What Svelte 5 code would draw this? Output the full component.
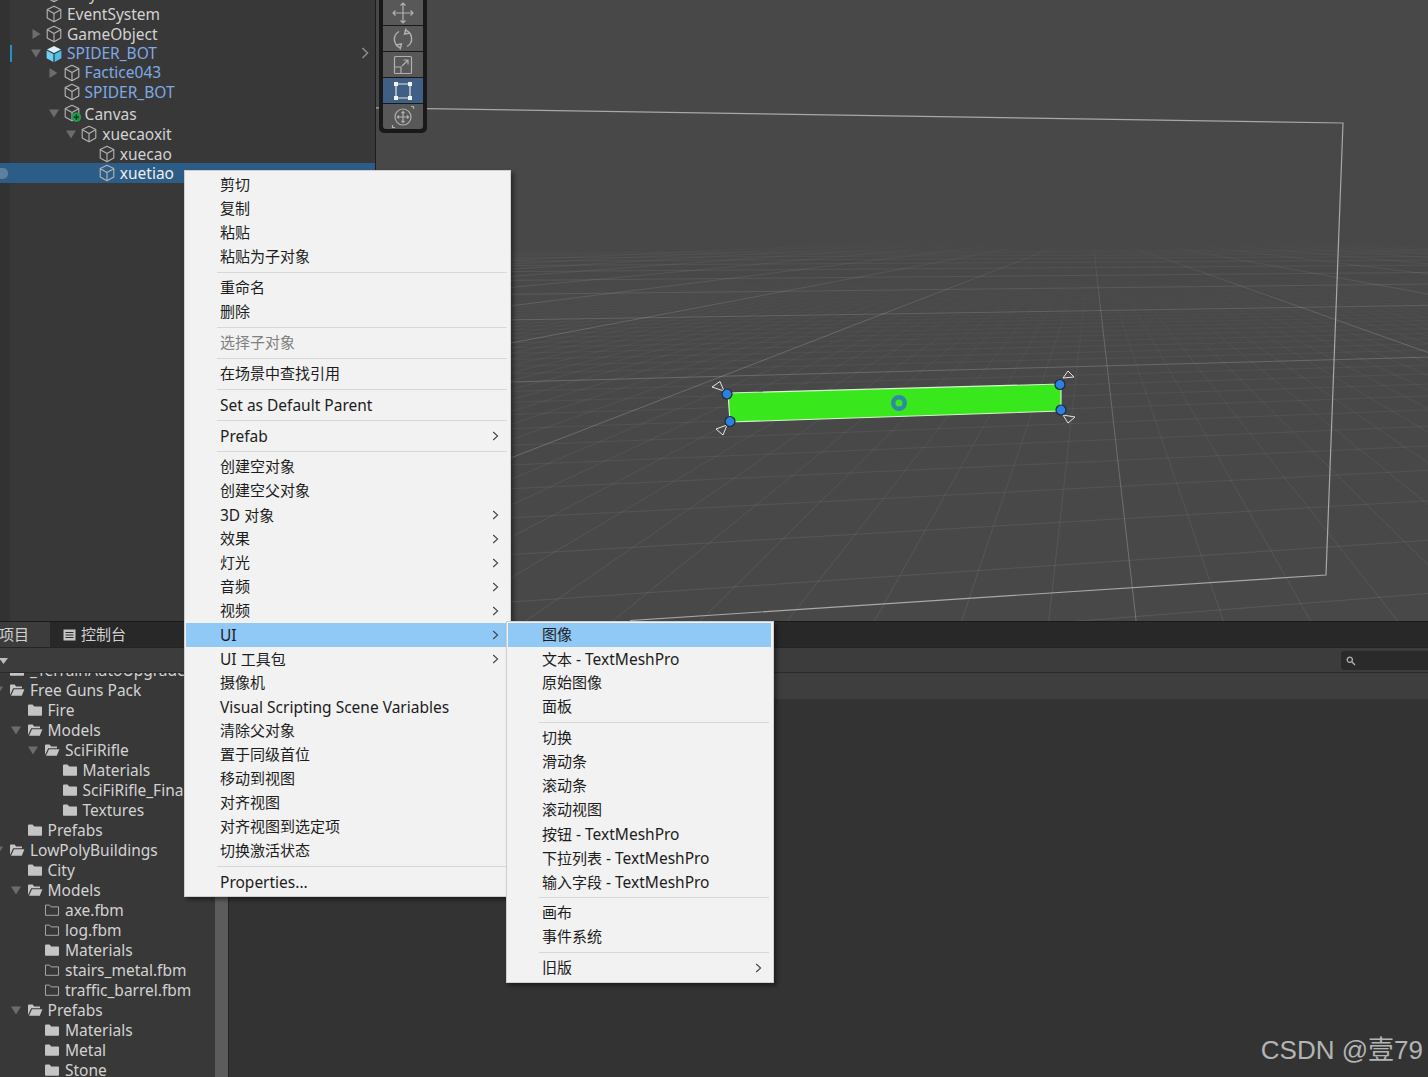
<script>
  const hierarchy = [
    { name: 'Player', depth: 0, h: 20 },
    { name: 'EventSystem', depth: 0, h: 20 },
    { name: 'GameObject', depth: 0, h: 20, arrow: 'right' },
    { name: 'SPIDER_BOT', depth: 0, h: 19, arrow: 'down', kind: 'root' },
    { name: 'Factice043', depth: 1, h: 19, arrow: 'right', kind: 'prefab' },
    { name: 'SPIDER_BOT', depth: 1, h: 20, kind: 'prefab' },
    { name: 'Canvas', depth: 1, h: 22, arrow: 'down', kind: 'canvas', nudge: 2 },
    { name: 'xuecaoxit', depth: 2, h: 20, arrow: 'down' },
    { name: 'xuecao', depth: 3, h: 19, nudge: 1 },
    { name: 'xuetiao', depth: 3, h: 20, nudge: 1, selected: true }
  ];

  const project = [
    { name: '_TerrainAutoUpgrade', depth: 0, icon: 'closed' },
    { name: 'Free Guns Pack', depth: 0, icon: 'open', arrow: true },
    { name: 'Fire', depth: 1, icon: 'closed' },
    { name: 'Models', depth: 1, icon: 'open', arrow: true },
    { name: 'SciFiRifle', depth: 2, icon: 'open', arrow: true },
    { name: 'Materials', depth: 3, icon: 'closed' },
    { name: 'SciFiRifle_Final', depth: 3, icon: 'closed' },
    { name: 'Textures', depth: 3, icon: 'closed' },
    { name: 'Prefabs', depth: 1, icon: 'closed' },
    { name: 'LowPolyBuildings', depth: 0, icon: 'open', arrow: true },
    { name: 'City', depth: 1, icon: 'closed' },
    { name: 'Models', depth: 1, icon: 'open', arrow: true },
    { name: 'axe.fbm', depth: 2, icon: 'empty' },
    { name: 'log.fbm', depth: 2, icon: 'empty' },
    { name: 'Materials', depth: 2, icon: 'closed' },
    { name: 'stairs_metal.fbm', depth: 2, icon: 'empty' },
    { name: 'traffic_barrel.fbm', depth: 2, icon: 'empty' },
    { name: 'Prefabs', depth: 1, icon: 'open', arrow: true },
    { name: 'Materials', depth: 2, icon: 'closed' },
    { name: 'Metal', depth: 2, icon: 'closed' },
    { name: 'Stone', depth: 2, icon: 'closed' }
  ];

  const mainMenu = [
    ['剪切', '复制', '粘贴', '粘贴为子对象'],
    ['重命名', '删除'],
    [{ t: '选择子对象', off: true }],
    ['在场景中查找引用'],
    ['Set as Default Parent'],
    [{ t: 'Prefab', sub: true }],
    ['创建空对象', '创建空父对象',
      { t: '3D 对象', sub: true }, { t: '效果', sub: true }, { t: '灯光', sub: true },
      { t: '音频', sub: true }, { t: '视频', sub: true },
      { t: 'UI', sub: true, on: true }, { t: 'UI 工具包', sub: true },
      '摄像机', 'Visual Scripting Scene Variables', '清除父对象', '置于同级首位',
      '移动到视图', '对齐视图', '对齐视图到选定项', '切换激活状态'],
    ['Properties...']
  ];

  const subMenu = [
    [{ t: '图像', on: true }, '文本 - TextMeshPro', '原始图像', '面板'],
    ['切换', '滑动条', '滚动条', '滚动视图', '按钮 - TextMeshPro', '下拉列表 - TextMeshPro', '输入字段 - TextMeshPro'],
    ['画布', '事件系统'],
    [{ t: '旧版', sub: true }]
  ];

  const item = (i) => (typeof i === 'string' ? { t: i } : i);
  // latin and cjk are set at slightly different sizes
  const runs = (s) => s.split(/([\x00-\x7f]+)/).filter(Boolean);
  const isCjk = (s) => !/^[\x00-\x7f]/.test(s);
  const hasLatin = (s) => /[\x00-\x7f]/.test(s);

  // ground grid, projected from two vanishing points on the horizon
  const horizon = 233;
  const vpA = 6000;
  const vpB = 1092;
  const linesA = [];
  const linesB = [];
  for (let n = -16; n < 120; n++) {
    const d = 0.00671 + n * 0.0004;
    if (d <= 0) continue;
    const major = ((n % 12) + 12) % 12 === 0;
    if (!major && d > 0.024) continue;
    const o = 1 / d;
    const at = (x) => horizon + (o * (vpA - x)) / (vpA - 510);
    linesA.push({ y1: at(376), y2: at(1428), major });
  }
  for (let n = -96; n <= 96; n++) {
    const major = ((n % 12) + 12) % 12 === 0;
    if (!major && Math.abs(n) > 36) continue;
    const base = 1136 + n * 87 - vpB;
    const at = (y) => vpB + (base * (y - horizon)) / 387;
    linesB.push({ x1: at(238), y1: 238, x2: at(621), y2: 621, major });
  }

  const handles = [[727, 394], [1060, 384.5], [1061, 410], [730, 421.5]];
</script>

{#snippet cube(kind)}
  <svg class="cube" width="18" height="18" viewBox="0 0 18 18">
    {#if kind === 'root'}
      <path d="M9 1 16 4.4 9 8 2 4.4Z" fill="#d8f2fb" />
      <path d="M1.6 5.4 8.4 9v8L1.6 13.2Z" fill="#6fd0f5" />
      <path d="M16.4 5.4 9.6 9v8l6.8-3.8Z" fill="#4fbde8" />
    {:else}
      <g fill="none" stroke={kind === 'prefab' ? '#b9b9b9' : '#b4b4b4'} stroke-width="1.1" stroke-linejoin="round">
        <path d="M9 1.2 15.8 4.6V13L9 16.8 2.2 13V4.6Z" />
        <path d="M2.4 4.8 9 8.6l6.6-3.8M9 8.6v8" />
      </g>
    {/if}
    {#if kind === 'canvas'}
      <circle cx="13.4" cy="13.2" r="4.8" fill="#1f9d4d" />
      <path d="M13.4 10.6v5.2M10.8 13.2H16" stroke="#0f3b1e" stroke-width="1.6" />
    {/if}
  </svg>
{/snippet}

{#snippet folder(type)}
  <svg class="folder" width="16" height="14" viewBox="0 0 16 14">
    {#if type === 'closed'}
      <path d="M1 2.5C1 2 1.4 1.6 2 1.6h3.6L7.2 3.4H14c.6 0 1 .4 1 1v7.4c0 .6-.4 1-1 1H2c-.6 0-1-.4-1-1Z" fill="#c4c4c4" />
    {:else if type === 'open'}
      <path d="M1 12V2.5c0-.5.4-.9 1-.9h3.6l1.600 1.800H13v1.800H4.200Z" fill="#c4c4c4" />
      <path d="M2 12.800 5 6.200h10.400L12.800 12.800Z" fill="#c4c4c4" />
    {:else}
      <path d="M1.500 2.100h4l1.600 1.800h7.400v8.400h-13Z" fill="none" stroke="#a6a6a6" stroke-width="1" />
    {/if}
  </svg>
{/snippet}

{#snippet chevron()}
  <svg class="chev" width="7" height="10" viewBox="0 0 7 10">
    <path d="M1.200 1 5.600 5 1.200 9" fill="none" stroke="#444" stroke-width="1.100" />
  </svg>
{/snippet}

{#snippet menuBody(groups)}
  {#each groups as group, g}
    {#if g > 0}<div class="sep"></div>{/if}
    {#each group as raw}
      {@const it = item(raw)}
      <div class="item" class:on={it.on} class:off={it.off} class:latin={hasLatin(it.t)}>
        <span>{#each runs(it.t) as r}<span class:cjk={isCjk(r)}>{r}</span>{/each}</span>
        {#if it.sub}{@render chevron()}{/if}
      </div>
    {/each}
  {/each}
{/snippet}

<div class="app">
  <div class="top">
    <div class="hier">
      <div class="strip"></div>
      <div class="hier-list">
        {#each hierarchy as row}
          <div
            class="row {row.kind === 'root' || row.kind === 'prefab' ? 'blue' : ''}"
            class:selected={row.selected}
            class:mark={row.kind === 'root'}
            style="height:{row.h}px;padding-left:{28 + row.depth * 17.6}px"
          >
            <span class="slot">
              {#if row.arrow === 'right'}
                <svg width="9" height="10" viewBox="0 0 9 10"><path d="M0.500 0 8.500 5 0.500 10Z" fill="#6c6c6c" /></svg>
              {:else if row.arrow === 'down'}
                <svg width="10" height="9" viewBox="0 0 10 9"><path d="M0 0.500H10L5 8.500Z" fill="#6c6c6c" /></svg>
              {/if}
            </span>
            {@render cube(row.kind)}
            <span class="label" style="margin-top:{row.nudge ?? 0}px">{row.name}</span>
          </div>
        {/each}
      </div>
      <svg class="more" width="8" height="12" viewBox="0 0 8 12">
        <path d="M1.500 1 6.500 6 1.500 11" fill="none" stroke="#8a8a8a" stroke-width="1.600" />
      </svg>
      <span class="sel-dot"></span>
    </div>

    <div class="scene">
      <svg class="world" width="1052" height="621" viewBox="376 0 1052 621">
        <defs>
          <linearGradient id="gMajor" gradientUnits="userSpaceOnUse" x1="0" y1="233" x2="0" y2="621">
            <stop offset="0.02" stop-color="#fff" stop-opacity="0" />
            <stop offset="0.07" stop-color="#fff" stop-opacity="0.045" />
            <stop offset="0.25" stop-color="#fff" stop-opacity="0.17" />
            <stop offset="1" stop-color="#fff" stop-opacity="0.24" />
          </linearGradient>
          <linearGradient id="gMinor" gradientUnits="userSpaceOnUse" x1="0" y1="233" x2="0" y2="621">
            <stop offset="0.1" stop-color="#fff" stop-opacity="0" />
            <stop offset="0.3" stop-color="#fff" stop-opacity="0.04" />
            <stop offset="1" stop-color="#fff" stop-opacity="0.085" />
          </linearGradient>
        </defs>
        {#each linesA as l}
          <path d="M376 {l.y1} L1428 {l.y2}" stroke={l.major ? 'url(#gMajor)' : 'url(#gMinor)'} fill="none" />
        {/each}
        {#each linesB as l}
          <path d="M{l.x1} {l.y1} L{l.x2} {l.y2}" stroke={l.major ? 'url(#gMajor)' : 'url(#gMinor)'} fill="none" />
        {/each}
        <path d="M376 107.800 1343 123 1326 575 630 620.500" fill="none" stroke="#a8a8a8" stroke-width="1.200" />

        <path d="M728 393 1061 384 1061 411 730 422Z" fill="#39e81c" stroke="#d8f5d0" stroke-width="1.100" />
        <circle cx="899" cy="403" r="5.800" fill="none" stroke="#2f8aa2" stroke-width="4.400" />
        <g fill="none" stroke="#e4e4e4" stroke-width="1">
          <path d="M712 387 720 381.500 724 391Z" />
          <path d="M1063 378 1068 371 1074 377Z" />
          <path d="M1063 415 1075 417 1068 423Z" />
          <path d="M716 429 727 425 723 435Z" />
        </g>
        {#each handles as h}
          <circle cx={h[0]} cy={h[1]} r="5" fill="#2d7fe0" stroke="#1c2a3a" stroke-width="1.200" />
        {/each}
      </svg>

      <div class="gizmos">
        <div class="tool">
          <svg width="24" height="24" viewBox="0 0 24 24" fill="none" stroke="#b0b0b0" stroke-width="1.200">
            <path d="M12 2v20M2 12h20M9.500 4.500 12 2l2.500 2.500M9.500 19.500 12 22l2.500-2.500M4.500 9.500 2 12l2.500 2.500M19.500 9.500 22 12l-2.500 2.500" />
          </svg>
        </div>
        <div class="tool">
          <svg width="24" height="24" viewBox="0 0 24 24" fill="none" stroke="#b0b0b0" stroke-width="1.400">
            <path d="M10 21A9 9 0 0 1 8 4.500M14 3A9 9 0 0 1 16 19.500" />
            <path d="M15 1.500 13.500 7 19 6M9 22.500l1.500-5.500L5 18" />
          </svg>
        </div>
        <div class="tool">
          <svg width="24" height="24" viewBox="0 0 24 24" fill="none" stroke="#b0b0b0" stroke-width="1.200">
            <rect x="3.500" y="3.500" width="17" height="17" rx="1" />
            <path d="M3.500 14h6.500v6.500M11 13l6-6M12.500 7H17v4.500" />
          </svg>
        </div>
        <div class="tool active">
          <svg width="24" height="24" viewBox="0 0 24 24" fill="none">
            <path d="M5 5h14v14H5Z" stroke="#e6e6e6" stroke-width="1.200" />
            <path d="M3 3h4v4H3ZM17 3h4v4h-4ZM3 17h4v4H3ZM17 17h4v4h-4Z" fill="#f4f4f4" />
          </svg>
        </div>
        <div class="tool last">
          <svg width="24" height="24" viewBox="0 0 24 24" fill="none" stroke="#b0b0b0" stroke-width="1.200">
            <circle cx="12" cy="12" r="8" />
            <path d="M12 6.500v11M6.500 12h11M10.500 8 12 6.500 13.500 8M10.500 16 12 17.500 13.500 16M8 10.500 6.500 12 8 13.500M16 10.500 17.500 12 16 13.500" />
            <path d="M1.500 20v2.500H4M22.500 4V1.500H20" />
          </svg>
        </div>
      </div>
    </div>
  </div>

  <div class="bottom">
    <div class="tabs">
      <div class="tab current"><span>项目</span></div>
      <div class="tab">
        <svg width="13" height="12" viewBox="0 0 13 12">
          <path d="M0.500 0.500h12v11h-12Z" fill="#c4c4c4" />
          <path d="M2.500 3.500h8M2.500 6h8M2.500 8.500h8" stroke="#2a2a2a" stroke-width="1.200" />
        </svg>
        <span>控制台</span>
      </div>
    </div>
    <div class="bar">
      <svg width="9" height="6" viewBox="0 0 9 6"><path d="M0 0H9L4.500 6Z" fill="#bdbdbd" /></svg>
      <div class="search">
        <svg width="10" height="10" viewBox="0 0 10 10" fill="none" stroke="#b4b4b4" stroke-width="1.300">
          <circle cx="3.800" cy="3.800" r="2.600" />
          <path d="M5.800 5.800 9 9" />
        </svg>
      </div>
    </div>
    <div class="body">
      <div class="tree">
        {#each project as row}
          <div class="prow" style="margin-left:{-7 + row.depth * 17.5}px">
            <span class="pslot">
              {#if row.arrow}
                <svg width="10" height="9" viewBox="0 0 10 9"><path d="M0 0.500H10L5 8.500Z" fill="#6c6c6c" /></svg>
              {/if}
            </span>
            {@render folder(row.icon)}
            <span class="plabel">{row.name}</span>
          </div>
        {/each}
      </div>
      <div class="scrollbar"></div>
      <div class="console">
        <div class="console-head"></div>
      </div>
    </div>
  </div>

  <div class="menu main-menu">{@render menuBody(mainMenu)}</div>
  <div class="menu sub-menu">{@render menuBody(subMenu)}</div>
  <div class="watermark">CSDN @壹79</div>
</div>

<style>
  :global(body) {
    margin: 0;
    background: #333;
  }

  .app {
    position: relative;
    width: 1428px;
    height: 1077px;
    overflow: hidden;
    display: flex;
    flex-direction: column;
    font-family: "Noto Sans", "Noto Sans CJK SC", sans-serif;
    font-size: 15.5px;
    color: #d2d2d2;
  }

  .cjk {
    font-size: 15px;
  }

  .top {
    display: flex;
    height: 621px;
    flex: none;
  }

  /* hierarchy */
  .hier {
    position: relative;
    width: 375px;
    flex: none;
    background: #383838;
    border-right: 1px solid #1d1d1d;
    overflow: hidden;
  }
  .strip {
    position: absolute;
    left: 0;
    top: 0;
    bottom: 0;
    width: 10px;
    background: #323232;
  }
  .hier-list {
    position: relative;
    margin-top: -16px;
  }
  .row {
    display: flex;
    align-items: center;
    box-sizing: border-box;
    white-space: nowrap;
    position: relative;
  }
  .row.selected {
    background: #2c5d87;
    color: #eee;
  }
  .row.blue {
    color: #7ea9e6;
  }
  .row.mark::before {
    content: "";
    position: absolute;
    left: 10px;
    top: 1px;
    bottom: 1px;
    width: 2px;
    background: #2a8fc0;
  }
  .sel-dot {
    position: absolute;
    left: -4px;
    top: 168px;
    width: 12px;
    height: 11px;
    border-radius: 5px;
    background: #5f7f9e;
  }
  .more {
    position: absolute;
    left: 361px;
    top: 47px;
  }
  .slot {
    width: 16px;
    height: 12px;
    flex: none;
    display: flex;
    align-items: center;
    justify-content: center;
  }
  .cube {
    margin-left: 1px;
    flex: none;
  }
  .label {
    margin-left: 4px;
    line-height: 17px;
  }

  /* scene */
  .scene {
    position: relative;
    flex: 1;
    background: #484848;
    overflow: hidden;
  }
  .world {
    position: absolute;
    left: 0;
    top: 0;
  }
  .gizmos {
    position: absolute;
    left: 3px;
    top: -4px;
    width: 40px;
    padding: 0 4px 4px;
    background: #191919;
    border-radius: 0 0 5px 5px;
    display: flex;
    flex-direction: column;
  }
  .tool {
    height: 25px;
    margin-bottom: 1px;
    background: #585858;
    display: flex;
    align-items: center;
    justify-content: center;
  }
  .tool:first-child {
    margin-top: 4px;
  }
  .tool.active {
    background: #3f5f85;
  }
  .tool.last {
    margin-bottom: 0;
    border-radius: 0 0 3px 3px;
  }

  /* bottom panels */
  .bottom {
    flex: 1;
    display: flex;
    flex-direction: column;
    min-height: 0;
    border-top: 1px solid #1a1a1a;
  }
  .tabs {
    height: 25px;
    flex: none;
    background: #282828;
    display: flex;
    border-bottom: 1px solid #242424;
    font-size: 15px;
  }
  .tab {
    display: flex;
    align-items: center;
    gap: 5px;
    padding-left: 13px;
    width: 90px;
    line-height: 1;
  }
  .tab.current {
    width: 50px;
    padding-left: 0;
    background: #3c3c3c;
  }
  .tab.current span {
    margin-left: -1px;
  }
  .bar {
    height: 25px;
    flex: none;
    background: #3c3c3c;
    border-bottom: 1px solid #2a2a2a;
    display: flex;
    align-items: center;
    justify-content: space-between;
    padding-top: 1px;
    box-sizing: border-box;
  }
  .bar > svg {
    margin-left: -1px;
  }
  .search {
    width: 87px;
    height: 19px;
    background: #2a2a2a;
    border-radius: 3px 0 0 3px;
    display: flex;
    align-items: center;
    padding-left: 5px;
    box-sizing: border-box;
  }
  .body {
    flex: 1;
    display: flex;
    min-height: 0;
  }
  .tree {
    width: 215px;
    flex: none;
    background: #383838;
    overflow: hidden;
  }
  .prow {
    height: 20px;
    display: flex;
    align-items: center;
    white-space: nowrap;
  }
  .prow:first-child {
    margin-top: -13px;
  }
  .pslot {
    width: 16px;
    flex: none;
    display: flex;
    align-items: center;
  }
  .folder {
    flex: none;
  }
  .plabel {
    margin-left: 5px;
  }
  .scrollbar {
    width: 13px;
    flex: none;
    background: #5c5c5c;
    border-right: 1px solid #222;
  }
  .console {
    flex: 1;
    background: #333;
  }
  .console-head {
    height: 26px;
    background: #3e3e3e;
  }

  /* context menus */
  .menu {
    position: absolute;
    box-sizing: border-box;
    background: #f2f2f2;
    border: 1px solid #cfcfcf;
    box-shadow: 3px 3px 4px rgba(0, 0, 0, 0.4);
    color: #1c1c1c;
  }
  .main-menu {
    left: 184px;
    top: 170px;
    width: 327px;
    height: 727px;
    padding: 2px 1px;
  }
  .sub-menu {
    left: 506px;
    top: 621px;
    width: 268px;
    height: 362px;
    padding: 1px 2px 1px 1px;
  }
  .item {
    height: 24px;
    box-sizing: border-box;
    display: flex;
    align-items: center;
    justify-content: space-between;
    padding: 0 10px 2px 34px;
    white-space: nowrap;
  }
  .item.latin {
    padding-bottom: 0;
  }
  .sub-menu .item {
    padding-right: 9px;
  }
  .item.on {
    background: #90c8f6;
  }
  .item.off {
    color: #7f7f7f;
  }
  .chev {
    flex: none;
    margin-top: 2px;
  }
  .item.latin .chev {
    margin-top: 0;
  }
  .sep {
    height: 1px;
    margin: 3px 2px 3px 31px;
    background: #d7d7d7;
  }

  .watermark {
    position: absolute;
    right: 5px;
    bottom: 9px;
    font-family: "Liberation Sans", "Noto Sans CJK SC", sans-serif;
    font-size: 26px;
    line-height: 36px;
    color: #b4b4b4;
    white-space: nowrap;
  }
</style>
